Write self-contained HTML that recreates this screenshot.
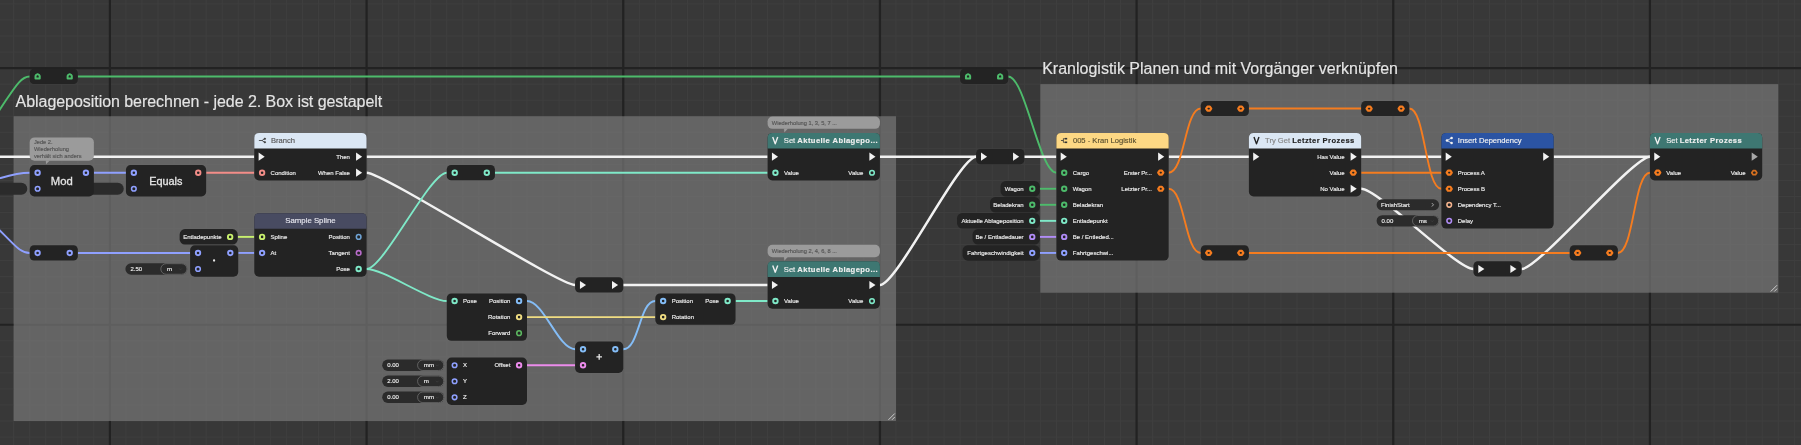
<!DOCTYPE html>
<html lang="de"><head><meta charset="utf-8"><title>Graph</title>
<style>
html,body{margin:0;padding:0;background:#383838;}
body{width:1801px;height:445px;overflow:hidden;}
svg{display:block;font-family:"Liberation Sans",sans-serif;will-change:transform;}
text{white-space:pre;stroke-width:0.15px;}
</style></head><body>
<svg width="1801" height="445" viewBox="0 0 1801 445">
<rect width="1801" height="445" fill="#383838"/>
<path d="M13.65 0V445M29.69 0V445M45.73 0V445M61.77 0V445M77.82 0V445M93.86 0V445M125.94 0V445M141.98 0V445M158.03 0V445M174.07 0V445M190.11 0V445M206.15 0V445M222.19 0V445M238.24 0V445M254.28 0V445M270.32 0V445M286.36 0V445M302.4 0V445M318.45 0V445M334.49 0V445M350.53 0V445M382.61 0V445M398.66 0V445M414.7 0V445M430.74 0V445M446.78 0V445M462.82 0V445M478.87 0V445M494.91 0V445M510.95 0V445M526.99 0V445M543.03 0V445M559.08 0V445M575.12 0V445M591.16 0V445M607.2 0V445M639.29 0V445M655.33 0V445M671.37 0V445M687.41 0V445M703.45 0V445M719.5 0V445M735.54 0V445M751.58 0V445M767.62 0V445M783.66 0V445M799.71 0V445M815.75 0V445M831.79 0V445M847.83 0V445M863.87 0V445M895.96 0V445M912 0V445M928.04 0V445M944.08 0V445M960.13 0V445M976.17 0V445M992.21 0V445M1008.25 0V445M1024.29 0V445M1040.34 0V445M1056.38 0V445M1072.42 0V445M1088.46 0V445M1104.5 0V445M1120.55 0V445M1152.63 0V445M1168.67 0V445M1184.71 0V445M1200.76 0V445M1216.8 0V445M1232.84 0V445M1248.88 0V445M1264.92 0V445M1280.97 0V445M1297.01 0V445M1313.05 0V445M1329.09 0V445M1345.13 0V445M1361.18 0V445M1377.22 0V445M1409.3 0V445M1425.34 0V445M1441.39 0V445M1457.43 0V445M1473.47 0V445M1489.51 0V445M1505.55 0V445M1521.6 0V445M1537.64 0V445M1553.68 0V445M1569.72 0V445M1585.76 0V445M1601.81 0V445M1617.85 0V445M1633.89 0V445M1665.97 0V445M1682.02 0V445M1698.06 0V445M1714.1 0V445M1730.14 0V445M1746.18 0V445M1762.23 0V445M1778.27 0V445M1794.31 0V445M0 3.93H1801M0 19.97H1801M0 36.02H1801M0 52.06H1801M0 84.14H1801M0 100.18H1801M0 116.23H1801M0 132.27H1801M0 148.31H1801M0 164.35H1801M0 180.39H1801M0 196.44H1801M0 212.48H1801M0 228.52H1801M0 244.56H1801M0 260.6H1801M0 276.65H1801M0 292.69H1801M0 308.73H1801M0 340.81H1801M0 356.86H1801M0 372.9H1801M0 388.94H1801M0 404.98H1801M0 421.02H1801M0 437.07H1801" stroke="#3f3f3f" stroke-width="1" fill="none"/>
<path d="M109.9 0V445M366.57 0V445M623.24 0V445M879.92 0V445M1136.59 0V445M1393.26 0V445M1649.93 0V445M0 68.1H1801M0 324.77H1801" stroke="#222222" stroke-width="2.2" fill="none"/>
<rect x="13.65" y="116.23" width="882.31" height="304.8" rx="0" fill="rgba(119,119,119,0.7)"/>
<rect x="1040.34" y="84.14" width="737.93" height="208.55" rx="0" fill="rgba(119,119,119,0.7)"/>
<path d="M888.46 419.82L894.76 413.52M891.96 419.82L894.76 417.02" stroke="#d8d8d8" stroke-width="0.9" fill="none"/>
<path d="M1770.77 291.49L1777.07 285.19M1774.27 291.49L1777.07 288.69" stroke="#d8d8d8" stroke-width="0.9" fill="none"/>
<text x="15.6" y="106.8" font-size="16" fill="#e4e4e4" stroke="#e4e4e4" id="t1" letter-spacing="-0.05">Ablageposition berechnen - jede 2. Box ist gestapelt</text>
<text x="1042.2" y="74.4" font-size="16" fill="#e4e4e4" stroke="#e4e4e4" id="t2">Kranlogistik Planen und mit Vorgänger verknüpfen</text>
<g id="wires">
<path d="M-10 124.5L5.6 100.8C16.5 84.5 21.9 76.47 29.69 76.47" stroke="#4dbb6b" stroke-width="1.9" fill="none"/>
<path d="M77.82 76.47L960.13 76.47" stroke="#4dbb6b" stroke-width="1.9" fill="none"/>
<path d="M1008.25 76.47C1025.25 76.47 1039.38 172.72 1056.38 172.72" stroke="#4dbb6b" stroke-width="1.9" fill="none"/>
<path d="M-5 156.68L254.28 156.68" stroke="#f2f2f2" stroke-width="2.5" fill="none"/>
<path d="M366.57 156.68L767.62 156.68" stroke="#f2f2f2" stroke-width="2.5" fill="none"/>
<path d="M879.92 156.68L976.17 156.68" stroke="#f2f2f2" stroke-width="2.5" fill="none"/>
<path d="M1024.29 156.68L1056.38 156.68" stroke="#f2f2f2" stroke-width="2.5" fill="none"/>
<path d="M1168.67 156.68L1248.88 156.68" stroke="#f2f2f2" stroke-width="2.5" fill="none"/>
<path d="M1361.18 156.68L1441.39 156.68" stroke="#f2f2f2" stroke-width="2.5" fill="none"/>
<path d="M1553.68 156.68L1649.93 156.68" stroke="#f2f2f2" stroke-width="2.5" fill="none"/>
<path d="M366.57 172.72C383.57 172.72 558.12 285.02 575.12 285.02" stroke="#f2f2f2" stroke-width="2.5" fill="none"/>
<path d="M623.24 285.02L767.62 285.02" stroke="#f2f2f2" stroke-width="2.5" fill="none"/>
<path d="M879.92 285.02C896.92 285.02 959.17 156.68 976.17 156.68" stroke="#f2f2f2" stroke-width="2.5" fill="none"/>
<path d="M1361.18 188.77C1378.18 188.77 1456.47 268.98 1473.47 268.98" stroke="#f2f2f2" stroke-width="2.5" fill="none"/>
<path d="M1521.6 268.98C1538.6 268.98 1632.93 156.68 1649.93 156.68" stroke="#f2f2f2" stroke-width="2.5" fill="none"/>
<path d="M-10 181.2L0 178.2C10 175.2 18 172.72 29.69 172.72" stroke="#8fa0ff" stroke-width="1.9" fill="none"/>
<path d="M93.86 172.72L125.94 172.72" stroke="#8fa0ff" stroke-width="1.9" fill="none"/>
<path d="M-10 220.6L6 236.6C16 246.6 21 252.93 29.69 252.93" stroke="#8fa0ff" stroke-width="1.9" fill="none"/>
<path d="M77.82 252.93L190.11 252.93" stroke="#8fa0ff" stroke-width="1.9" fill="none"/>
<path d="M238.24 252.93L254.28 252.93" stroke="#8fa0ff" stroke-width="1.9" fill="none"/>
<path d="M206.15 172.72L254.28 172.72" stroke="#f38d88" stroke-width="1.9" fill="none"/>
<path d="M237.74 236.89L254.28 236.89" stroke="#c8f06e" stroke-width="1.9" fill="none"/>
<path d="M366.57 268.98C383.57 268.98 429.78 172.72 446.78 172.72" stroke="#7fe9c8" stroke-width="1.9" fill="none"/>
<path d="M366.57 268.98C383.57 268.98 429.78 301.06 446.78 301.06" stroke="#7fe9c8" stroke-width="1.9" fill="none"/>
<path d="M494.91 172.72L767.62 172.72" stroke="#7fe9c8" stroke-width="1.9" fill="none"/>
<path d="M735.54 301.06L767.62 301.06" stroke="#7fe9c8" stroke-width="1.9" fill="none"/>
<path d="M526.99 301.06C543.99 301.06 558.12 349.19 575.12 349.19" stroke="#84bdf7" stroke-width="1.9" fill="none"/>
<path d="M623.24 349.19C639.29 349.19 639.29 301.06 655.33 301.06" stroke="#84bdf7" stroke-width="1.9" fill="none"/>
<path d="M526.99 317.1L655.33 317.1" stroke="#f0dd82" stroke-width="1.9" fill="none"/>
<path d="M526.99 365.23L575.12 365.23" stroke="#ec8cec" stroke-width="1.9" fill="none"/>
<path d="M1039.84 188.77L1056.38 188.77" stroke="#4dbb6b" stroke-width="1.9" fill="none"/>
<path d="M1039.84 204.81L1056.38 204.81" stroke="#4dbb6b" stroke-width="1.9" fill="none"/>
<path d="M1039.84 220.85L1056.38 220.85" stroke="#7fe9c8" stroke-width="1.9" fill="none"/>
<path d="M1039.84 236.89L1056.38 236.89" stroke="#b18cf7" stroke-width="1.9" fill="none"/>
<path d="M1039.84 252.93L1056.38 252.93" stroke="#8fa0ff" stroke-width="1.9" fill="none"/>
<path d="M1168.67 172.72C1184.71 172.72 1184.71 108.55 1200.76 108.55" stroke="#f57c1f" stroke-width="1.9" fill="none"/>
<path d="M1248.88 108.55L1361.18 108.55" stroke="#f57c1f" stroke-width="1.9" fill="none"/>
<path d="M1409.3 108.55C1425.34 108.55 1425.34 188.77 1441.39 188.77" stroke="#f57c1f" stroke-width="1.9" fill="none"/>
<path d="M1168.67 188.77C1184.71 188.77 1184.71 252.93 1200.76 252.93" stroke="#f57c1f" stroke-width="1.9" fill="none"/>
<path d="M1248.88 252.93L1569.72 252.93" stroke="#f57c1f" stroke-width="1.9" fill="none"/>
<path d="M1617.85 252.93C1633.89 252.93 1633.89 172.72 1649.93 172.72" stroke="#f57c1f" stroke-width="1.9" fill="none"/>
<path d="M1361.18 172.72L1441.39 172.72" stroke="#f57c1f" stroke-width="1.9" fill="none"/>
</g>
<g id="nodes">
<rect x="-34.71" y="182.77" width="62" height="12" rx="6" fill="#2b2b2b"/>
<rect x="61.74" y="182.77" width="62" height="12" rx="6" fill="#2b2b2b"/>
<rect x="29.69" y="68.8" width="48.13" height="15.24" rx="4.3" fill="#232323"/><path d="M35.51 78.57L35.51 75.97Q35.71 74.77 37.61 74.17Q39.51 74.77 39.71 75.97L39.71 78.57Z" fill="none" stroke="#4dbb6b" stroke-width="2" stroke-linejoin="round"/><path d="M67.6 78.57L67.6 75.97Q67.8 74.77 69.7 74.17Q71.6 74.77 71.8 75.97L71.8 78.57Z" fill="none" stroke="#4dbb6b" stroke-width="2" stroke-linejoin="round"/>
<rect x="960.13" y="68.8" width="48.13" height="15.24" rx="4.3" fill="#232323"/><path d="M965.95 78.57L965.95 75.97Q966.15 74.77 968.05 74.17Q969.95 74.77 970.15 75.97L970.15 78.57Z" fill="none" stroke="#4dbb6b" stroke-width="2" stroke-linejoin="round"/><path d="M998.03 78.57L998.03 75.97Q998.23 74.77 1000.13 74.17Q1002.03 74.77 1002.23 75.97L1002.23 78.57Z" fill="none" stroke="#4dbb6b" stroke-width="2" stroke-linejoin="round"/>
<rect x="29.69" y="245.26" width="48.13" height="15.24" rx="4.3" fill="#232323"/><circle cx="37.61" cy="252.93" r="2.25" fill="none" stroke="#8fa0ff" stroke-width="1.9"/><circle cx="69.7" cy="252.93" r="2.25" fill="none" stroke="#8fa0ff" stroke-width="1.9"/>
<rect x="446.78" y="165.05" width="48.13" height="15.24" rx="4.3" fill="#232323"/><circle cx="454.7" cy="172.72" r="2.25" fill="none" stroke="#7fe9c8" stroke-width="1.9"/><circle cx="486.79" cy="172.72" r="2.25" fill="none" stroke="#7fe9c8" stroke-width="1.9"/>
<rect x="575.12" y="277.35" width="48.13" height="15.24" rx="4.3" fill="#232323"/><path d="M579.94 280.92L586.04 285.02L579.94 289.12Z" fill="#f2f2f2"/><path d="M612.02 280.92L618.12 285.02L612.02 289.12Z" fill="#f2f2f2"/>
<rect x="976.17" y="149.01" width="48.13" height="15.24" rx="4.3" fill="#232323"/><path d="M980.99 152.58L987.09 156.68L980.99 160.78Z" fill="#f2f2f2"/><path d="M1013.07 152.58L1019.17 156.68L1013.07 160.78Z" fill="#f2f2f2"/>
<rect x="1200.76" y="100.88" width="48.13" height="15.24" rx="4.3" fill="#232323"/><path d="M1206.13 108.55L1207.48 106.55L1209.88 106.55L1211.23 108.55L1209.88 110.55L1207.48 110.55Z" fill="none" stroke="#f57c1f" stroke-width="2.2" stroke-linejoin="round"/><path d="M1238.21 108.55L1239.56 106.55L1241.96 106.55L1243.31 108.55L1241.96 110.55L1239.56 110.55Z" fill="none" stroke="#f57c1f" stroke-width="2.2" stroke-linejoin="round"/>
<rect x="1361.18" y="100.88" width="48.13" height="15.24" rx="4.3" fill="#232323"/><path d="M1366.55 108.55L1367.9 106.55L1370.3 106.55L1371.65 108.55L1370.3 110.55L1367.9 110.55Z" fill="none" stroke="#f57c1f" stroke-width="2.2" stroke-linejoin="round"/><path d="M1398.63 108.55L1399.98 106.55L1402.38 106.55L1403.73 108.55L1402.38 110.55L1399.98 110.55Z" fill="none" stroke="#f57c1f" stroke-width="2.2" stroke-linejoin="round"/>
<rect x="1200.76" y="245.26" width="48.13" height="15.24" rx="4.3" fill="#232323"/><path d="M1206.13 252.93L1207.48 250.93L1209.88 250.93L1211.23 252.93L1209.88 254.93L1207.48 254.93Z" fill="none" stroke="#f57c1f" stroke-width="2.2" stroke-linejoin="round"/><path d="M1238.21 252.93L1239.56 250.93L1241.96 250.93L1243.31 252.93L1241.96 254.93L1239.56 254.93Z" fill="none" stroke="#f57c1f" stroke-width="2.2" stroke-linejoin="round"/>
<rect x="1569.72" y="245.26" width="48.13" height="15.24" rx="4.3" fill="#232323"/><path d="M1575.09 252.93L1576.44 250.93L1578.84 250.93L1580.19 252.93L1578.84 254.93L1576.44 254.93Z" fill="none" stroke="#f57c1f" stroke-width="2.2" stroke-linejoin="round"/><path d="M1607.18 252.93L1608.53 250.93L1610.93 250.93L1612.28 252.93L1610.93 254.93L1608.53 254.93Z" fill="none" stroke="#f57c1f" stroke-width="2.2" stroke-linejoin="round"/>
<rect x="1473.47" y="261.3" width="48.13" height="15.24" rx="4.3" fill="#232323"/><path d="M1478.29 264.88L1484.39 268.98L1478.29 273.08Z" fill="#f2f2f2"/><path d="M1510.38 264.88L1516.48 268.98L1510.38 273.08Z" fill="#f2f2f2"/>
<rect x="29.69" y="137.4" width="64.17" height="23.3" rx="4.8" fill="#9b9b9b"/><path d="M45.8 160.4L49.8 160.4L46.1 164.3Z" fill="#9b9b9b"/><text x="33.89" y="143.6" font-size="5.7" fill="#555" stroke="#555">Jede 2.</text><text x="33.89" y="150.6" font-size="5.7" fill="#555" stroke="#555">Wiederholung</text><text x="33.89" y="157.6" font-size="5.7" fill="#555" stroke="#555">verhält sich anders</text>
<rect x="29.69" y="165.05" width="64.17" height="31.38" rx="4.7" fill="#232323"/>
<circle cx="37.61" cy="172.72" r="2.25" fill="none" stroke="#8fa0ff" stroke-width="1.9"/>
<circle cx="37.61" cy="188.77" r="2.3" fill="none" stroke="#8fa0ff" stroke-width="1.55"/>
<circle cx="85.94" cy="172.72" r="2.25" fill="none" stroke="#8fa0ff" stroke-width="1.9"/>
<text x="61.77" y="184.8" font-size="11.3" fill="#e4e4e4" stroke="#e4e4e4" text-anchor="middle" style="stroke-width:0.3px">Mod</text>
<rect x="125.94" y="165.05" width="80.21" height="31.38" rx="4.7" fill="#232323"/>
<circle cx="133.86" cy="172.72" r="2.25" fill="none" stroke="#8fa0ff" stroke-width="1.9"/>
<circle cx="133.86" cy="188.77" r="2.3" fill="none" stroke="#8fa0ff" stroke-width="1.55"/>
<circle cx="198.23" cy="172.72" r="2.25" fill="none" stroke="#f38d88" stroke-width="1.9"/>
<text x="165.85" y="184.8" font-size="10.9" fill="#e4e4e4" stroke="#e4e4e4" text-anchor="middle" style="stroke-width:0.3px">Equals</text>
<rect x="254.28" y="132.97" width="112.29" height="47.43" rx="4.7" fill="#232323"/><path d="M254.28 148.61V137.67Q254.28 132.97 258.98 132.97H361.87Q366.57 132.97 366.57 137.67V148.61Z" fill="#dbe7f4"/>
<text x="270.92" y="143.2" font-size="7.6" fill="#555" stroke="#555">Branch</text>
<g stroke="#333" stroke-width="0.8" fill="#333"><path d="M258.88 140.5h3.2l2.2 -1.6M262.08 140.5l2.2 1.6" fill="none"/><circle cx="264.88" cy="138.8" r="0.7"/><circle cx="264.88" cy="142.2" r="0.7"/></g>
<path d="M258.6 152.58L264.7 156.68L258.6 160.78Z" fill="#f2f2f2"/>
<path d="M356.05 152.58L362.15 156.68L356.05 160.78Z" fill="#f2f2f2"/><text x="349.93" y="158.83" font-size="6" fill="#ededed" stroke="#ededed" text-anchor="end">Then</text>
<circle cx="262.1" cy="172.72" r="2.25" fill="none" stroke="#f38d88" stroke-width="1.9"/><text x="270.62" y="174.87" font-size="6" fill="#ededed" stroke="#ededed">Condition</text>
<path d="M356.05 168.62L362.15 172.72L356.05 176.82Z" fill="#f2f2f2"/><text x="349.93" y="174.87" font-size="6" fill="#ededed" stroke="#ededed" text-anchor="end">When False</text>
<rect x="179.64" y="229.09" width="58.1" height="15.5" rx="5.3" fill="#232323"/><circle cx="230.14" cy="236.89" r="2.25" fill="none" stroke="#c8f06e" stroke-width="1.9"/><text x="221.54" y="239.04" font-size="6" fill="#ededed" stroke="#ededed" text-anchor="end">Entladepunkte</text>
<rect x="190.11" y="245.26" width="48.13" height="31.38" rx="4.7" fill="#232323"/>
<circle cx="198.03" cy="252.93" r="2.25" fill="none" stroke="#8fa0ff" stroke-width="1.9"/>
<circle cx="198.03" cy="268.98" r="2.3" fill="none" stroke="#8fa0ff" stroke-width="1.55"/>
<circle cx="230.32" cy="252.93" r="2.25" fill="none" stroke="#8fa0ff" stroke-width="1.9"/>
<circle cx="214.07" cy="260.5" r="1.15" fill="#e8e8e8"/>
<rect x="125.41" y="263.28" width="62" height="11.4" rx="5.7" fill="#2b2b2b"/><rect x="160.81" y="263.68" width="26.2" height="10.6" rx="5.3" fill="#2b2b2b" stroke="#777" stroke-width="0.7"/><text x="130.41" y="271.08" font-size="6" fill="#ededed" stroke="#ededed">2.50</text><text x="167.01" y="271.08" font-size="6.2" fill="#ededed" stroke="#ededed">m</text><path d="M179.21 268.48l1.3 1.4l1.3 -1.4" stroke="#404040" stroke-width="0.7" fill="none"/>
<rect x="254.28" y="213.18" width="112.29" height="63.47" rx="4.7" fill="#232323"/><path d="M254.28 228.82V217.88Q254.28 213.18 258.98 213.18H361.87Q366.57 213.18 366.57 217.88V228.82Z" fill="#484b61"/>
<text x="310.43" y="223.1" font-size="7.8" fill="#e6e6ee" stroke="#e6e6ee" text-anchor="middle">Sample Spline</text>
<circle cx="262.1" cy="236.89" r="2.25" fill="none" stroke="#c8f06e" stroke-width="1.9"/><text x="270.62" y="239.04" font-size="6" fill="#ededed" stroke="#ededed">Spline</text>
<circle cx="358.65" cy="236.89" r="2.3" fill="none" stroke="#6fa3d4" stroke-width="1.55"/><text x="349.93" y="239.04" font-size="6" fill="#ededed" stroke="#ededed" text-anchor="end">Position</text>
<circle cx="262.1" cy="252.93" r="2.25" fill="none" stroke="#8fa0ff" stroke-width="1.9"/><text x="270.62" y="255.08" font-size="6" fill="#ededed" stroke="#ededed">At</text>
<circle cx="358.65" cy="252.93" r="2.3" fill="none" stroke="#b96ccb" stroke-width="1.55"/><text x="349.93" y="255.08" font-size="6" fill="#ededed" stroke="#ededed" text-anchor="end">Tangent</text>
<circle cx="358.65" cy="268.98" r="2.25" fill="none" stroke="#7fe9c8" stroke-width="1.9"/><text x="349.93" y="271.12" font-size="6" fill="#ededed" stroke="#ededed" text-anchor="end">Pose</text>
<rect x="446.78" y="293.39" width="80.21" height="47.43" rx="4.7" fill="#232323"/>
<circle cx="454.6" cy="301.06" r="2.25" fill="none" stroke="#7fe9c8" stroke-width="1.9"/><text x="463.12" y="303.21" font-size="6" fill="#ededed" stroke="#ededed">Pose</text>
<circle cx="519.07" cy="301.06" r="2.25" fill="none" stroke="#84bdf7" stroke-width="1.9"/><text x="510.35" y="303.21" font-size="6" fill="#ededed" stroke="#ededed" text-anchor="end">Position</text>
<circle cx="519.07" cy="317.1" r="2.25" fill="none" stroke="#f0dd82" stroke-width="1.9"/><text x="510.35" y="319.25" font-size="6" fill="#ededed" stroke="#ededed" text-anchor="end">Rotation</text>
<circle cx="519.07" cy="333.14" r="2.3" fill="none" stroke="#5cb860" stroke-width="1.55"/><text x="510.35" y="335.29" font-size="6" fill="#ededed" stroke="#ededed" text-anchor="end">Forward</text>
<rect x="575.12" y="341.51" width="48.13" height="31.38" rx="4.7" fill="#232323"/>
<circle cx="583.04" cy="349.19" r="2.25" fill="none" stroke="#84bdf7" stroke-width="1.9"/>
<circle cx="583.04" cy="365.23" r="2.25" fill="none" stroke="#ec8cec" stroke-width="1.9"/>
<circle cx="615.32" cy="349.19" r="2.25" fill="none" stroke="#84bdf7" stroke-width="1.9"/>
<path d="M596.38 356.86h5.6M599.18 354.06v5.6" stroke="#e8e8e8" stroke-width="1.3"/>
<rect x="446.78" y="357.56" width="80.21" height="47.43" rx="4.7" fill="#232323"/>
<circle cx="454.6" cy="365.23" r="2.3" fill="none" stroke="#8fa0ff" stroke-width="1.55"/><text x="463.12" y="367.38" font-size="6" fill="#ededed" stroke="#ededed">X</text>
<circle cx="519.07" cy="365.23" r="2.25" fill="none" stroke="#ec8cec" stroke-width="1.9"/><text x="510.35" y="367.38" font-size="6" fill="#ededed" stroke="#ededed" text-anchor="end">Offset</text>
<circle cx="454.6" cy="381.27" r="2.3" fill="none" stroke="#8fa0ff" stroke-width="1.55"/><text x="463.12" y="383.42" font-size="6" fill="#ededed" stroke="#ededed">Y</text>
<circle cx="454.6" cy="397.31" r="2.3" fill="none" stroke="#8fa0ff" stroke-width="1.55"/><text x="463.12" y="399.46" font-size="6" fill="#ededed" stroke="#ededed">Z</text>
<rect x="382.18" y="359.53" width="62" height="11.4" rx="5.7" fill="#2b2b2b"/><rect x="417.58" y="359.93" width="26.2" height="10.6" rx="5.3" fill="#2b2b2b" stroke="#777" stroke-width="0.7"/><text x="387.18" y="367.33" font-size="6" fill="#ededed" stroke="#ededed">0.00</text><text x="423.78" y="367.33" font-size="6.2" fill="#ededed" stroke="#ededed">mm</text><path d="M435.98 364.73l1.3 1.4l1.3 -1.4" stroke="#404040" stroke-width="0.7" fill="none"/>
<rect x="382.18" y="375.57" width="62" height="11.4" rx="5.7" fill="#2b2b2b"/><rect x="417.58" y="375.97" width="26.2" height="10.6" rx="5.3" fill="#2b2b2b" stroke="#777" stroke-width="0.7"/><text x="387.18" y="383.37" font-size="6" fill="#ededed" stroke="#ededed">2.00</text><text x="423.78" y="383.37" font-size="6.2" fill="#ededed" stroke="#ededed">m</text><path d="M435.98 380.77l1.3 1.4l1.3 -1.4" stroke="#404040" stroke-width="0.7" fill="none"/>
<rect x="382.18" y="391.61" width="62" height="11.4" rx="5.7" fill="#2b2b2b"/><rect x="417.58" y="392.01" width="26.2" height="10.6" rx="5.3" fill="#2b2b2b" stroke="#777" stroke-width="0.7"/><text x="387.18" y="399.41" font-size="6" fill="#ededed" stroke="#ededed">0.00</text><text x="423.78" y="399.41" font-size="6.2" fill="#ededed" stroke="#ededed">mm</text><path d="M435.98 396.81l1.3 1.4l1.3 -1.4" stroke="#404040" stroke-width="0.7" fill="none"/>
<rect x="655.33" y="293.39" width="80.21" height="31.38" rx="4.7" fill="#232323"/>
<circle cx="663.15" cy="301.06" r="2.25" fill="none" stroke="#84bdf7" stroke-width="1.9"/><text x="671.67" y="303.21" font-size="6" fill="#ededed" stroke="#ededed">Position</text>
<circle cx="727.62" cy="301.06" r="2.25" fill="none" stroke="#7fe9c8" stroke-width="1.9"/><text x="718.9" y="303.21" font-size="6" fill="#ededed" stroke="#ededed" text-anchor="end">Pose</text>
<circle cx="663.15" cy="317.1" r="2.25" fill="none" stroke="#f0dd82" stroke-width="1.9"/><text x="671.67" y="319.25" font-size="6" fill="#ededed" stroke="#ededed">Rotation</text>
<rect x="767.62" y="116.53" width="112.29" height="12.3" rx="4.8" fill="#9b9b9b"/><path d="M784 128.53L788 128.53L784.3 132.43Z" fill="#9b9b9b"/><text x="771.82" y="124.53" font-size="5.7" fill="#555" stroke="#555">Wiederholung 1, 3, 5, 7 ...</text>
<rect x="767.62" y="132.97" width="112.29" height="47.43" rx="4.7" fill="#232323"/><path d="M767.62 148.61V137.67Q767.62 132.97 772.32 132.97H875.22Q879.92 132.97 879.92 137.67V148.61Z" fill="#3e7772"/><path d="M772.72 137.07l2.5 6.8l2.5 -6.8" stroke="#f0f0f0" stroke-width="1.4" fill="none" stroke-linejoin="round"/><text x="783.82" y="143.47" font-size="7.6" fill="#f0f0f0" stroke="#f0f0f0">Set <tspan font-weight="bold" letter-spacing="0.42">Aktuelle Ablagepo...</tspan></text><path d="M771.94 152.58L778.04 156.68L771.94 160.78Z" fill="#f2f2f2"/><path d="M869.4 152.58L875.5 156.68L869.4 160.78Z" fill="#f2f2f2"/><circle cx="775.44" cy="172.72" r="2.25" fill="none" stroke="#7fe9c8" stroke-width="1.9"/><text x="783.96" y="174.87" font-size="6" fill="#ededed" stroke="#ededed">Value</text><circle cx="872" cy="172.72" r="2.3" fill="none" stroke="#7fe9c8" stroke-width="1.55"/><text x="863.27" y="174.87" font-size="6" fill="#ededed" stroke="#ededed" text-anchor="end">Value</text>
<rect x="767.62" y="244.86" width="112.29" height="12.3" rx="4.8" fill="#9b9b9b"/><path d="M784 256.86L788 256.86L784.3 260.76Z" fill="#9b9b9b"/><text x="771.82" y="252.86" font-size="5.7" fill="#555" stroke="#555">Wiederholung 2, 4, 6, 8 ...</text>
<rect x="767.62" y="261.3" width="112.29" height="47.43" rx="4.7" fill="#232323"/><path d="M767.62 276.95V266Q767.62 261.3 772.32 261.3H875.22Q879.92 261.3 879.92 266V276.95Z" fill="#3e7772"/><path d="M772.72 265.4l2.5 6.8l2.5 -6.8" stroke="#f0f0f0" stroke-width="1.4" fill="none" stroke-linejoin="round"/><text x="783.82" y="271.8" font-size="7.6" fill="#f0f0f0" stroke="#f0f0f0">Set <tspan font-weight="bold" letter-spacing="0.42">Aktuelle Ablagepo...</tspan></text><path d="M771.94 280.92L778.04 285.02L771.94 289.12Z" fill="#f2f2f2"/><path d="M869.4 280.92L875.5 285.02L869.4 289.12Z" fill="#f2f2f2"/><circle cx="775.44" cy="301.06" r="2.25" fill="none" stroke="#7fe9c8" stroke-width="1.9"/><text x="783.96" y="303.21" font-size="6" fill="#ededed" stroke="#ededed">Value</text><circle cx="872" cy="301.06" r="2.3" fill="none" stroke="#7fe9c8" stroke-width="1.55"/><text x="863.27" y="303.21" font-size="6" fill="#ededed" stroke="#ededed" text-anchor="end">Value</text>
<rect x="1000.54" y="180.97" width="39.3" height="15.5" rx="5.3" fill="#232323"/><circle cx="1032.24" cy="188.77" r="2.25" fill="none" stroke="#4dbb6b" stroke-width="1.9"/><text x="1023.64" y="190.92" font-size="6" fill="#ededed" stroke="#ededed" text-anchor="end">Wagon</text>
<rect x="990.04" y="197.01" width="49.8" height="15.5" rx="5.3" fill="#232323"/><circle cx="1032.24" cy="204.81" r="2.25" fill="none" stroke="#4dbb6b" stroke-width="1.9"/><text x="1023.64" y="206.96" font-size="6" fill="#ededed" stroke="#ededed" text-anchor="end">Beladekran</text>
<rect x="957.04" y="213.05" width="82.8" height="15.5" rx="5.3" fill="#232323"/><circle cx="1032.24" cy="220.85" r="2.25" fill="none" stroke="#7fe9c8" stroke-width="1.9"/><text x="1023.64" y="223" font-size="6" fill="#ededed" stroke="#ededed" text-anchor="end">Aktuelle Ablageposition</text>
<rect x="972.54" y="229.09" width="67.3" height="15.5" rx="5.3" fill="#232323"/><circle cx="1032.24" cy="236.89" r="2.25" fill="none" stroke="#b18cf7" stroke-width="1.9"/><text x="1023.64" y="239.04" font-size="6" fill="#ededed" stroke="#ededed" text-anchor="end">Be / Entladedauer</text>
<rect x="962.54" y="245.13" width="77.3" height="15.5" rx="5.3" fill="#232323"/><circle cx="1032.24" cy="252.93" r="2.25" fill="none" stroke="#8fa0ff" stroke-width="1.9"/><text x="1023.64" y="255.08" font-size="6" fill="#ededed" stroke="#ededed" text-anchor="end">Fahrtgeschwindigkeit</text>
<rect x="1056.38" y="132.97" width="112.29" height="127.64" rx="4.7" fill="#232323"/><path d="M1056.38 148.61V137.67Q1056.38 132.97 1061.08 132.97H1163.97Q1168.67 132.97 1168.67 137.67V148.61Z" fill="#fdd884"/>
<text x="1072.92" y="143.2" font-size="7.6" fill="#5a5030" stroke="#5a5030">005 - Kran Logistik</text>
<g fill="#333" stroke="#333" stroke-width="0.8"><path d="M1060.98 140.5h2.2M1063.38 138.6v3.8" fill="none"/><rect x="1064.78" y="137.9" width="2.4" height="1.6" stroke="none"/><rect x="1064.78" y="141.5" width="2.4" height="1.6" stroke="none"/><path d="M1063.38 138.7h1.4M1063.38 142.3h1.4" fill="none"/></g>
<path d="M1060.7 152.58L1066.8 156.68L1060.7 160.78Z" fill="#f2f2f2"/>
<path d="M1158.15 152.58L1164.25 156.68L1158.15 160.78Z" fill="#f2f2f2"/>
<circle cx="1064.2" cy="172.72" r="2.25" fill="none" stroke="#4dbb6b" stroke-width="1.9"/><text x="1072.72" y="174.87" font-size="6" fill="#ededed" stroke="#ededed">Cargo</text>
<path d="M1158.2 172.72L1159.55 170.72L1161.95 170.72L1163.3 172.72L1161.95 174.72L1159.55 174.72Z" fill="none" stroke="#f57c1f" stroke-width="2.2" stroke-linejoin="round"/><text x="1152.03" y="174.87" font-size="6" fill="#ededed" stroke="#ededed" text-anchor="end">Erster Pr...</text>
<circle cx="1064.2" cy="188.77" r="2.25" fill="none" stroke="#4dbb6b" stroke-width="1.9"/><text x="1072.72" y="190.92" font-size="6" fill="#ededed" stroke="#ededed">Wagon</text>
<path d="M1158.2 188.77L1159.55 186.77L1161.95 186.77L1163.3 188.77L1161.95 190.77L1159.55 190.77Z" fill="none" stroke="#f57c1f" stroke-width="2.2" stroke-linejoin="round"/><text x="1152.03" y="190.92" font-size="6" fill="#ededed" stroke="#ededed" text-anchor="end">Letzter Pr...</text>
<circle cx="1064.2" cy="204.81" r="2.25" fill="none" stroke="#4dbb6b" stroke-width="1.9"/><text x="1072.72" y="206.96" font-size="6" fill="#ededed" stroke="#ededed">Beladekran</text>
<circle cx="1064.2" cy="220.85" r="2.25" fill="none" stroke="#7fe9c8" stroke-width="1.9"/><text x="1072.72" y="223" font-size="6" fill="#ededed" stroke="#ededed">Entladepunkt</text>
<circle cx="1064.2" cy="236.89" r="2.25" fill="none" stroke="#b18cf7" stroke-width="1.9"/><text x="1072.72" y="239.04" font-size="6" fill="#ededed" stroke="#ededed">Be / Entleded...</text>
<circle cx="1064.2" cy="252.93" r="2.25" fill="none" stroke="#8fa0ff" stroke-width="1.9"/><text x="1072.72" y="255.08" font-size="6" fill="#ededed" stroke="#ededed">Fahrtgeschwi...</text>
<rect x="1248.88" y="132.97" width="112.29" height="63.47" rx="4.7" fill="#232323"/><path d="M1248.88 148.61V137.67Q1248.88 132.97 1253.58 132.97H1356.48Q1361.18 132.97 1361.18 137.67V148.61Z" fill="#dbe7f4"/>
<path d="M1253.98 137.07l2.5 6.8l2.5 -6.8" stroke="#222" stroke-width="1.4" fill="none" stroke-linejoin="round"/>
<text x="1265.08" y="143.47" font-size="7.6" fill="#555" stroke="#555"><tspan fill="#858585" stroke="#858585">Try Get</tspan> <tspan fill="#222" stroke="#222" font-weight="bold" letter-spacing="0.42">Letzter Prozess</tspan></text>
<path d="M1253.2 152.58L1259.3 156.68L1253.2 160.78Z" fill="#f2f2f2"/>
<path d="M1350.65 152.58L1356.76 156.68L1350.65 160.78Z" fill="#f2f2f2"/><text x="1344.53" y="158.83" font-size="6" fill="#ededed" stroke="#ededed" text-anchor="end">Has Value</text>
<path d="M1350.71 172.72L1352.06 170.72L1354.46 170.72L1355.81 172.72L1354.46 174.72L1352.06 174.72Z" fill="none" stroke="#f57c1f" stroke-width="2.2" stroke-linejoin="round"/><text x="1344.53" y="174.87" font-size="6" fill="#ededed" stroke="#ededed" text-anchor="end">Value</text>
<path d="M1350.65 184.67L1356.76 188.77L1350.65 192.87Z" fill="#f2f2f2"/><text x="1344.53" y="190.92" font-size="6" fill="#ededed" stroke="#ededed" text-anchor="end">No Value</text>
<rect x="1376.59" y="199.31" width="62.5" height="11" rx="5.5" fill="#2b2b2b"/>
<text x="1381.09" y="206.91" font-size="6" fill="#ededed" stroke="#ededed">FinishStart</text>
<path d="M1431.89 203.11l1.6 1.7l-1.6 1.7" stroke="#e0e0e0" stroke-width="0.7" fill="none"/>
<rect x="1376.59" y="215.15" width="62.5" height="11.4" rx="5.7" fill="#2b2b2b"/><rect x="1412.49" y="215.55" width="26.2" height="10.6" rx="5.3" fill="#2b2b2b" stroke="#777" stroke-width="0.7"/><text x="1381.59" y="222.95" font-size="6" fill="#ededed" stroke="#ededed">0.00</text><text x="1418.69" y="222.95" font-size="6.2" fill="#ededed" stroke="#ededed">ms</text><path d="M1430.89 220.35l1.3 1.4l1.3 -1.4" stroke="#404040" stroke-width="0.7" fill="none"/>
<rect x="1441.39" y="132.97" width="112.29" height="95.55" rx="4.7" fill="#232323"/><path d="M1441.39 148.61V137.67Q1441.39 132.97 1446.09 132.97H1548.98Q1553.68 132.97 1553.68 137.67V148.61Z" fill="#2b54a3"/>
<text x="1457.83" y="143.2" font-size="7.6" fill="#f4f4f4" stroke="#f4f4f4">Insert Dependency</text>
<g fill="#f0f0f0" stroke="#f0f0f0" stroke-width="0.8"><circle cx="1446.99" cy="140.5" r="1.3" stroke="none"/><circle cx="1451.59" cy="138" r="1.3" stroke="none"/><circle cx="1451.59" cy="143" r="1.3" stroke="none"/><path d="M1446.99 140.5L1451.59 138M1446.99 140.5L1451.59 143" fill="none"/></g>
<path d="M1445.71 152.58L1451.81 156.68L1445.71 160.78Z" fill="#f2f2f2"/>
<path d="M1543.16 152.58L1549.26 156.68L1543.16 160.78Z" fill="#f2f2f2"/>
<path d="M1446.66 172.72L1448.01 170.72L1450.41 170.72L1451.76 172.72L1450.41 174.72L1448.01 174.72Z" fill="none" stroke="#f57c1f" stroke-width="2.2" stroke-linejoin="round"/><text x="1457.73" y="174.87" font-size="6" fill="#ededed" stroke="#ededed">Process A</text>
<path d="M1446.66 188.77L1448.01 186.77L1450.41 186.77L1451.76 188.77L1450.41 190.77L1448.01 190.77Z" fill="none" stroke="#f57c1f" stroke-width="2.2" stroke-linejoin="round"/><text x="1457.73" y="190.92" font-size="6" fill="#ededed" stroke="#ededed">Process B</text>
<circle cx="1449.21" cy="204.81" r="2.3" fill="none" stroke="#f6b48e" stroke-width="1.55"/><text x="1457.73" y="206.96" font-size="6" fill="#ededed" stroke="#ededed">Dependency T...</text>
<circle cx="1449.21" cy="220.85" r="2.3" fill="none" stroke="#b18cf7" stroke-width="1.55"/><text x="1457.73" y="223" font-size="6" fill="#ededed" stroke="#ededed">Delay</text>
<rect x="1649.93" y="132.97" width="112.29" height="47.43" rx="4.7" fill="#232323"/><path d="M1649.93 148.61V137.67Q1649.93 132.97 1654.63 132.97H1757.53Q1762.23 132.97 1762.23 137.67V148.61Z" fill="#3e7772"/><path d="M1655.03 137.07l2.5 6.8l2.5 -6.8" stroke="#f0f0f0" stroke-width="1.4" fill="none" stroke-linejoin="round"/><text x="1666.13" y="143.47" font-size="7.6" fill="#f0f0f0" stroke="#f0f0f0">Set <tspan font-weight="bold" letter-spacing="0.42">Letzter Prozess</tspan></text><path d="M1654.25 152.58L1660.35 156.68L1654.25 160.78Z" fill="#f2f2f2"/><path d="M1751.71 152.58L1757.81 156.68L1751.71 160.78Z" fill="#a8a8a8"/><path d="M1655.2 172.72L1656.55 170.72L1658.95 170.72L1660.3 172.72L1658.95 174.72L1656.55 174.72Z" fill="none" stroke="#f57c1f" stroke-width="2.2" stroke-linejoin="round"/><text x="1666.27" y="174.87" font-size="6" fill="#ededed" stroke="#ededed">Value</text><path d="M1751.76 172.72L1753.11 170.72L1755.51 170.72L1756.86 172.72L1755.51 174.72L1753.11 174.72Z" fill="none" stroke="#f57c1f" stroke-width="1.7" stroke-linejoin="round" opacity="0.85"/><text x="1745.58" y="174.87" font-size="6" fill="#ededed" stroke="#ededed" text-anchor="end">Value</text>
</g>
</svg>
</body></html>
